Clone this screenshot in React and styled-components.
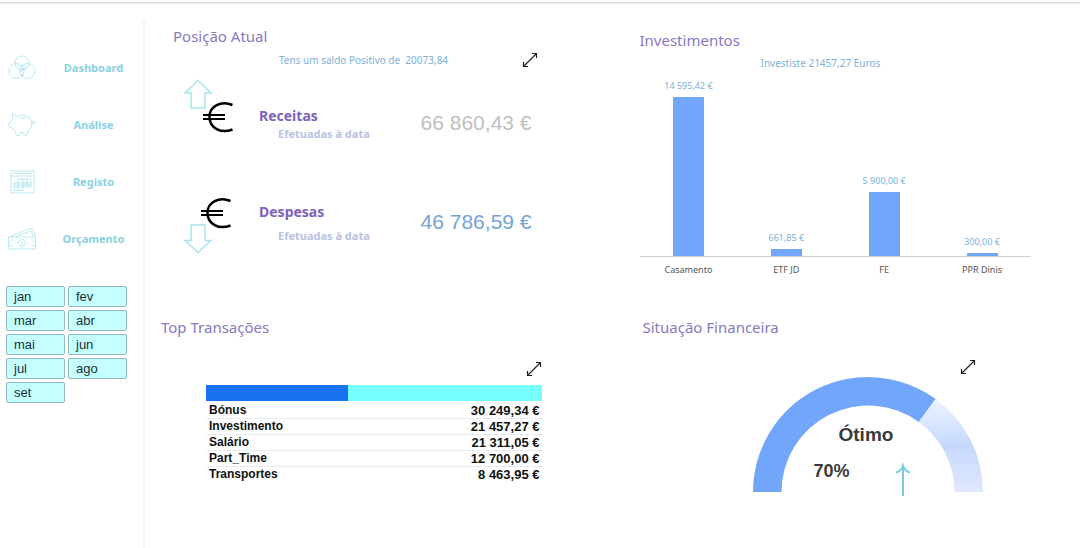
import React, { useState } from 'react'
import styled, { createGlobalStyle } from 'styled-components'

const months = ['jan', 'fev', 'mar', 'abr', 'mai', 'jun', 'jul', 'ago', 'set']

const transactions = [
    {label: 'Bónus', value: '30 249,34 €'},
    {label: 'Investimento', value: '21 457,27 €'},
    {label: 'Salário', value: '21 311,05 €'},
    {label: 'Part_Time', value: '12 700,00 €'},
    {label: 'Transportes', value: '8 463,95 €'}
]

const investments = [
    {name: 'Casamento', amount: 14595.42, label: '14 595,42 €'},
    {name: 'ETF JD', amount: 661.85, label: '661,85 €'},
    {name: 'FE', amount: 5900, label: '5 900,00 €'},
    {name: 'PPR Dinis', amount: 300, label: '300,00 €'}
]

const MAX_BAR = 159

const barHeight = amount => Math.round(amount / 14595.42 * MAX_BAR)

const CirclesIcon = () => (
    <NavIcon viewBox="0 0 28 28">
        <circle cx="14" cy="9" r="7" />
        <circle cx="8.5" cy="17" r="7.5" />
        <circle cx="19.5" cy="17" r="7.5" />
        <path d="M9 12h9M11 15h7M12 18l4-3M12 21h4" />
    </NavIcon>
)

const PigIcon = () => (
    <NavIcon viewBox="0 0 28 28">
        <path d="M5 8L4 2L9 5.500C12 3.500 19 4 22 7.500C23.500 9.500 24 12 23.500 14.500C23 17.500 21.500 19 20 20L19 24H16L15 21.500H12L11 24.500H8L7.500 20.500C6 19.500 5 18.500 4.500 17L1 16V11.500L3 11C3.500 10 4.300 9.200 5 8Z" />
        <path d="M23.500 12.500C27 13.500 27 9 25 10C23.800 10.700 25 13 27.500 11" />
        <path d="M11 7.500C13 6.500 16 6.500 18 7.500M7 11v1" />
    </NavIcon>
)

const CalendarIcon = () => (
    <NavIcon viewBox="0 0 28 28">
        <path d="M3 3H26V25H3ZM3 8H26M5 5.500H24" />
        <path d="M10 11H23V19H6V15H23M6 19V22.500H15V11M10 11V22.500M19 11V19M6 17H23" />
    </NavIcon>
)

const MoneyIcon = () => (
    <NavIcon viewBox="0 0 28 28">
        <path d="M.5 12H27.500V24H.5ZM2 11.500L22 3.500L24.500 4L28 12M8 11.500L23 6L26 11.500" />
        <circle cx="14" cy="18" r="3.5" />
        <path d="M4 14C4 15.500 3 17 1 17M4 22C4 21 3 20 1 20M24 14C24 15.500 25 17 27 17M24 22C24 21 25 20 27 20M14 16v4M7 18h1M20 18h1" />
    </NavIcon>
)

const menu = [
    {label: 'Dashboard', Icon: CirclesIcon},
    {label: 'Análise', Icon: PigIcon},
    {label: 'Registo', Icon: CalendarIcon},
    {label: 'Orçamento', Icon: MoneyIcon}
]

const Expand = ({ name }) => (
    <ExpandButton type="button" aria-label={name}>
        <svg width="16" height="16" viewBox="0 0 16 16" fill="none" stroke="#222" strokeWidth="1.2">
            <path d="M1.500 14.500L14.500 1.500M10 1.500H14.500V6M1.500 10V14.500H6" />
        </svg>
    </ExpandButton>
)

const EuroUp = () => (
    <svg width="52" height="56" viewBox="0 0 52 56" fill="none">
        <path d="M15 2.500L28 15H22V30H8V15H2Z" stroke="#a6e6ec" strokeWidth="1.5" />
        <path d="M49.500 27C38 22.500 26.500 28 26.500 39C26.500 50 38 56 49.500 51.500" stroke="#000" strokeWidth="2.5" />
        <path d="M20 37H42M20 41H42" stroke="#000" strokeWidth="2" />
    </svg>
)

const EuroDown = () => (
    <svg width="52" height="58" viewBox="0 0 52 58" fill="none">
        <path d="M15 55.500L28 43.500H22V28H8V43.500H2Z" stroke="#a6e6ec" strokeWidth="1.5" />
        <path d="M47.500 4C36 -.5 24.500 5 24.500 16C24.500 27 36 33 47.500 28.500" stroke="#000" strokeWidth="2.5" />
        <path d="M18 14H40M18 18H40" stroke="#000" strokeWidth="2" />
    </svg>
)

const App = () => {
    const [month, setMonth] = useState(null)

    return (
        <Page>
            <GlobalStyle />
            <TopLine />
            <Layout>
                <Sidebar>
                    <nav>
                        {menu.map(({ label, Icon }) => (
                            <NavLink href="#" key={label}>
                                <Icon />
                                <span>{label}</span>
                            </NavLink>
                        ))}
                    </nav>
                    <Months>
                        {months.map(m => (
                            <MonthButton
                                key={m}
                                type="button"
                                $active={m === month}
                                onClick={() => setMonth(m)}
                            >
                                {m}
                            </MonthButton>
                        ))}
                    </Months>
                </Sidebar>
                <Content>
                    <Panel $side="left" $top="22px">
                        <Title $indent="12px">Posição Atual</Title>
                        <NoteRow>
                            <Note>Tens um saldo Positivo de&nbsp; 20073,84</Note>
                            <Expand name="Expandir posição" />
                        </NoteRow>
                        <Entry>
                            <EuroUp />
                            <EntryText>
                                <EntryName>Receitas</EntryName>
                                <EntryInfo>Efetuadas à data</EntryInfo>
                            </EntryText>
                            <Amount $color="#bfbfbf">66 860,43 €</Amount>
                        </Entry>
                        <Entry $down>
                            <EuroDown />
                            <EntryText $down>
                                <EntryName>Despesas</EntryName>
                                <EntryInfo>Efetuadas à data</EntryInfo>
                            </EntryText>
                            <Amount $down $color="#74a3d4">46 786,59 €</Amount>
                        </Entry>
                    </Panel>
                    <Panel $side="right" $top="26px">
                        <Title>Investimentos</Title>
                        <ChartNote>Investiste 21457,27 Euros</ChartNote>
                        <Chart>
                            {investments.map(i => (
                                <BarColumn key={i.name}>
                                    <BarValue>{i.label}</BarValue>
                                    <Bar style={{ height: barHeight(i.amount) }} />
                                </BarColumn>
                            ))}
                        </Chart>
                        <Categories>
                            {investments.map(i => <span key={i.name}>{i.name}</span>)}
                        </Categories>
                    </Panel>
                    <Panel $side="left" $top="40px">
                        <Title>Top Transações</Title>
                        <TopBox>
                            <Expand name="Expandir transações" />
                            <Split>
                                <SplitPart $grow={142} $color="#1872f2" />
                                <SplitPart $grow={193} $color="#76ffff" />
                            </Split>
                            <Table>
                                <tbody>
                                    {transactions.map(t => (
                                        <tr key={t.label}>
                                            <th scope="row">{t.label}</th>
                                            <td>{t.value}</td>
                                        </tr>
                                    ))}
                                </tbody>
                            </Table>
                        </TopBox>
                    </Panel>
                    <Panel $side="right" $top="40px">
                        <Title $indent="3px">Situação Financeira</Title>
                        <GaugeBox>
                            <Expand name="Expandir situação" />
                            <Gauge>
                                <svg width="230" height="120" viewBox="0 0 230 120">
                                    <defs>
                                        <linearGradient id="rest" x1="0" y1="0" x2="0" y2="1">
                                            <stop offset="0" stopColor="#edf3ff" />
                                            <stop offset="0.5" stopColor="#c6d9fd" />
                                            <stop offset="1" stopColor="#e0e9fe" />
                                        </linearGradient>
                                    </defs>
                                    <path d="M0 115A115 115 0 0 1 182.600 22L165.800 45A86.500 86.500 0 0 0 28.500 115Z" fill="#71a6fb" />
                                    <path d="M182.600 22A115 115 0 0 1 230 115H201.500A86.500 86.500 0 0 0 165.800 45Z" fill="url(#rest)" />
                                    <path d="M150 119V89M143 95.500C147 94.500 149 91.500 150 88.500C151 91.500 153 94.500 157 95.500" fill="none" stroke="#7ccbe0" strokeWidth="2" />
                                </svg>
                                <GaugeText>
                                    <strong>Ótimo</strong>
                                    <span>70%</span>
                                </GaugeText>
                            </Gauge>
                        </GaugeBox>
                    </Panel>
                </Content>
            </Layout>
        </Page>
    )
}

const GlobalStyle = createGlobalStyle`
  *{
    box-sizing:border-box;
  }
  body{
    margin:0;
    background:#fff;
    font-family:'Noto Sans', sans-serif;
  }
`;

const Page = styled.div`
  min-height:100vh;
  display:flex;
  flex-direction:column;
`;

const TopLine = styled.div`
  height:4px;
  border-top:2px solid #fdfdfd;
  border-bottom:1px solid #f0f0f0;
  background:#d6d6d8;
`;

const Layout = styled.div`
  flex:1;
  display:grid;
  grid-template-columns:145px 1fr;
`;

const Sidebar = styled.aside`
  margin-top:16px;
  padding-top:19px;
  border-right:2px solid #f3f2fb;
`;

const NavLink = styled.a`
  height:57px;
  padding-left:8px;
  display:grid;
  grid-template-columns:28px 1fr;
  align-items:center;
  gap:8px;
  color:#8ad2e2;
  font-size:11px;
  font-weight:bold;
  text-align:center;
  text-decoration:none;
`;

const NavIcon = styled.svg`
  width:28px;
  height:28px;
  fill:none;
  stroke:#a9e3ea;
  stroke-width:.8;
`;

const Months = styled.div`
  padding:19px 0 0 6px;
  display:grid;
  grid-template-columns:59px 59px;
  gap:3px;
`;

const MonthButton = styled.button`
  height:21px;
  padding:0 7px;
  border:1px solid #8fb9bd;
  border-radius:2px;
  background:${({ $active }) => $active ? '#9ff3f5' : '#c6ffff'};
  color:#163238;
  font:13px 'Liberation Sans', sans-serif;
  text-align:left;
`;

const Content = styled.main`
  display:grid;
  grid-template-columns:1fr 1fr;
  align-content:start;
`;

const Panel = styled.section`
  padding-top:${({ $top }) => $top};
  padding-left:${({ $side }) => $side === 'left' ? '16px' : '27px'};
  padding-right:${({ $side }) => $side === 'left' ? '71px' : '49px'};
`;

const Title = styled.h2`
  margin:0;
  padding-left:${({ $indent }) => $indent || '0'};
  color:#8878c3;
  font-size:15px;
  font-weight:normal;
  line-height:20px;
`;

const NoteRow = styled.div`
  margin-top:6px;
  padding:0 4px 0 118px;
  display:flex;
  align-items:center;
  justify-content:space-between;
`;

const Note = styled.p`
  margin:0;
  color:#7db0da;
  font-size:10px;
  line-height:16px;
  white-space:nowrap;
`;

const ChartNote = styled(Note)`
  margin:5px 0 9px 121px;
`;

const ExpandButton = styled.button`
  width:16px;
  height:16px;
  padding:0;
  border:0;
  background:none;
  svg{
    display:block;
  }
`;

const Entry = styled.div`
  margin-top:${({ $down }) => $down ? '55px' : '10px'};
  padding:0 10px 0 22px;
  display:flex;
  align-items:flex-start;
  gap:24px;
`;

const EntryText = styled.div`
  display:flex;
  flex-direction:column;
  gap:${({ $down }) => $down ? '6px' : '0'};
  padding-top:${({ $down }) => $down ? '5px' : '28px'};
`;

const EntryName = styled.strong`
  color:#7d62bb;
  font-size:14px;
  line-height:20px;
`;

const EntryInfo = styled.span`
  padding-left:19px;
  color:#b8c2e3;
  font-size:11px;
  font-weight:bold;
  line-height:16px;
`;

const Amount = styled.span`
  margin-left:auto;
  padding-top:${({ $down }) => $down ? '13px' : '33px'};
  color:${({ $color }) => $color};
  font:21px/24px 'Liberation Sans', sans-serif;
  white-space:nowrap;
`;

const TopBox = styled.div`
  padding:24px 0 0 45px;
  ${ExpandButton}{
    display:block;
    margin-left:auto;
  }
`;

const Split = styled.div`
  height:16px;
  margin-top:8px;
  display:flex;
`;

const SplitPart = styled.div`
  flex:${({ $grow }) => $grow};
  background:${({ $color }) => $color};
`;

const Table = styled.table`
  width:100%;
  margin-top:2px;
  border-collapse:collapse;
  color:#111;
  font-family:'Liberation Sans', sans-serif;
  font-weight:bold;
  tr + tr{
    border-top:1px solid #e6eef2;
  }
  th, td{
    padding:0 2px 0 3px;
    line-height:15px;
    vertical-align:middle;
  }
  th{
    font-size:12px;
    text-align:left;
  }
  td{
    font-size:13px;
    text-align:right;
  }
`;

const Chart = styled.div`
  height:177px;
  display:flex;
  align-items:flex-end;
  border-bottom:1px solid #cfcfcf;
`;

const BarColumn = styled.div`
  flex:1;
  display:flex;
  flex-direction:column;
  align-items:center;
  gap:5px;
`;

const BarValue = styled.span`
  color:#7db0da;
  font-size:9px;
  line-height:12px;
`;

const Bar = styled.div`
  width:31px;
  background:#71a6fb;
`;

const Categories = styled.div`
  margin-top:6px;
  display:flex;
  color:#555;
  font-size:9px;
  line-height:14px;
  span{
    flex:1;
    text-align:center;
  }
`;

const GaugeBox = styled.div`
  padding-top:22px;
  ${ExpandButton}{
    display:block;
    margin:0 55px 0 auto;
  }
`;

const Gauge = styled.div`
  position:relative;
  width:230px;
  margin:2px 0 0 113px;
  svg{
    display:block;
  }
`;

const GaugeText = styled.div`
  position:absolute;
  top:47px;
  left:61px;
  display:flex;
  flex-direction:column;
  gap:14px;
  color:#3b3b3b;
  font:bold 18px/22px 'Liberation Sans', sans-serif;
  strong{
    padding-left:25px;
    font-size:19px;
  }
`;

export default App
